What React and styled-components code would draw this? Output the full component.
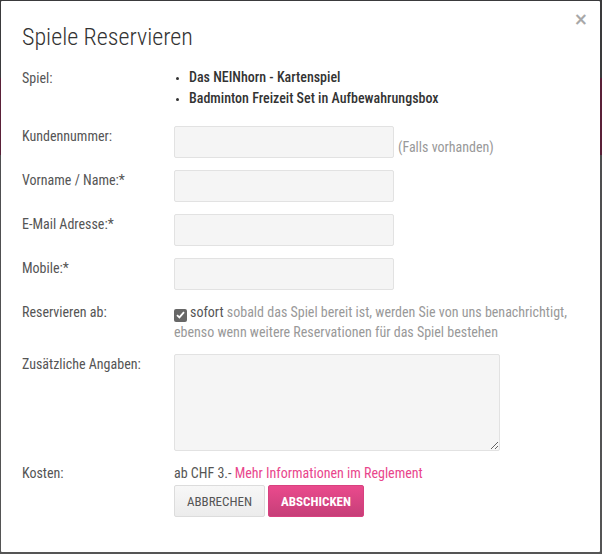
import React from "react";
import styled, { createGlobalStyle } from "styled-components";

const Global = createGlobalStyle`
  html, body { margin: 0; padding: 0; }
  body {
    background: #4b4b4d;
    font-family: Roboto, "Noto Sans", "Liberation Sans", sans-serif;
    font-stretch: 87.5%;
    font-size: 14px;
    color: #555;
  }
  * { box-sizing: border-box; }
`;

const Backdrop = styled.div`
  width: 602px;
  height: 554px;
  padding: 1px 2px 2px 1px;
  background: linear-gradient(180deg, #3a3a3c 0%, #3a3a3c 14%, #5a2038 14%, #5a2038 28%, #4e4e50 28%, #555 100%);
`;

const Modal = styled.div`
  position: relative;
  width: 100%;
  height: 100%;
  background: #fff;
  border-radius: 1px;
  padding: 0 0 0 21px;
`;

const Header = styled.div`
  padding: 22px 0 0 0;
  height: 66px;
`;

const Title = styled.h4`
  margin: 0;
  font-family: Roboto, sans-serif;
  font-stretch: 87.5%;
  font-weight: 300;
  font-size: 24px;
  line-height: 28px;
  color: #333;
`;

const Close = styled.button`
  position: absolute;
  top: 10px;
  right: 12px;
  border: 0;
  background: none;
  padding: 0;
  font-family: "DejaVu Sans", sans-serif;
  font-size: 17px;
  font-weight: 700;
  line-height: 1;
  color: #a8a8a8;
  cursor: pointer;
`;

const Form = styled.div`
  display: grid;
  grid-template-columns: 152px 1fr;
  column-gap: 0;
`;

const Label = styled.div`
  font-size: 14px;
  line-height: 20px;
  color: #555;
  padding-top: ${(p) => p.$pt || 0}px;
  margin-bottom: ${(p) => p.$mb || 0}px;
`;

const Field = styled.div`
  display: flex;
  align-items: flex-end;
  gap: 4px;
  margin-bottom: ${(p) => p.$mb || 0}px;
`;

const GameList = styled.ul`
  margin: 0;
  padding: 0 0 0 15px;
  list-style: disc;
  font-weight: 500;
  color: #333;
  font-size: 14px;
  line-height: 21px;
  li::marker { font-size: 10px; color: #333; }
`;

const Input = styled.input`
  width: 220px;
  height: 32px;
  border: 1px solid #e2e2e2;
  border-radius: 2px;
  background: #f5f5f5;
  padding: 0 8px;
  font: inherit;
`;

const Hint = styled.span`
  color: #999;
  font-size: 14px;
  line-height: 20px;
  padding-bottom: 1px;
`;

const CheckText = styled.div`
  font-size: 14px;
  line-height: 20px;
  color: #999;
  strong { font-weight: 400; color: #555; }
`;

const CheckBox = styled.span`
  display: inline-flex;
  align-items: center;
  justify-content: center;
  width: 13px;
  height: 13px;
  border-radius: 2px;
  background: #676767;
  vertical-align: -2px;
  margin-right: 3px;
`;

const TextArea = styled.textarea`
  width: 326px;
  height: 97px;
  border: 1px solid #e2e2e2;
  border-radius: 2px;
  background: #f5f5f5;
  resize: vertical;
  font: inherit;
  display: block;
`;

const Cost = styled.div`
  font-size: 14px;
  line-height: 20px;
  color: #555;
`;

const Link = styled.a`
  color: #e9468c;
  text-decoration: none;
`;

const Buttons = styled.div`
  display: flex;
  gap: 3px;
  margin-top: 2px;
`;

const Button = styled.button`
  height: 32px;
  padding: 0 12px;
  border-radius: 2px;
  font-family: Roboto, sans-serif;
  font-stretch: 87.5%;
  font-size: 13px;
  text-transform: uppercase;
  cursor: pointer;
  border: 1px solid ${(p) => (p.$primary ? "#d8417f" : "#dcdcdc")};
  background: ${(p) =>
    p.$primary
      ? "linear-gradient(180deg, #ea4a8d 0%, #c63f78 100%)"
      : "linear-gradient(180deg, #f7f7f7 0%, #ececec 100%)"};
  color: ${(p) => (p.$primary ? "#fff" : "#555")};
  font-weight: ${(p) => (p.$primary ? 700 : 400)};
`;

export default function App() {
  return (
    <>
      <Global />
      <Backdrop>
        <Modal>
          <Close aria-label="Schliessen">×</Close>
          <Header>
            <Title>Spiele Reservieren</Title>
          </Header>
          <Form>
            <Label $pt={1}>Spiel:</Label>
            <Field $mb={17}>
              <GameList>
                <li>Das NEINhorn - Kartenspiel</li>
                <li>Badminton Freizeit Set in Aufbewahrungsbox</li>
              </GameList>
            </Field>

            <Label $pt={0}>Kundennummer:</Label>
            <Field $mb={12}>
              <Input />
              <Hint>(Falls vorhanden)</Hint>
            </Field>

            <Label>Vorname / Name:*</Label>
            <Field $mb={12}>
              <Input />
            </Field>

            <Label>E-Mail Adresse:*</Label>
            <Field $mb={12}>
              <Input />
            </Field>

            <Label>Mobile:*</Label>
            <Field $mb={12}>
              <Input />
            </Field>

            <Label>Reservieren ab:</Label>
            <Field $mb={12}>
              <CheckText>
                <CheckBox>
                  <svg width="9" height="8" viewBox="0 0 9 8">
                    <path d="M1 4.2 L3.4 6.4 L8 1.2" stroke="#fff" strokeWidth="1.8" fill="none" />
                  </svg>
                </CheckBox>
                <strong>sofort</strong> sobald das Spiel bereit ist, werden Sie von uns benachrichtigt,
                <br />
                ebenso wenn weitere Reservationen für das Spiel bestehen
              </CheckText>
            </Field>

            <Label>Zusätzliche Angaben:</Label>
            <Field $mb={12}>
              <TextArea />
            </Field>

            <Label>Kosten:</Label>
            <Field>
              <div>
                <Cost>
                  ab CHF 3.- <Link href="#">Mehr Informationen im Reglement</Link>
                </Cost>
                <Buttons>
                  <Button>Abbrechen</Button>
                  <Button $primary>Abschicken</Button>
                </Buttons>
              </div>
            </Field>
          </Form>
        </Modal>
      </Backdrop>
    </>
  );
}
